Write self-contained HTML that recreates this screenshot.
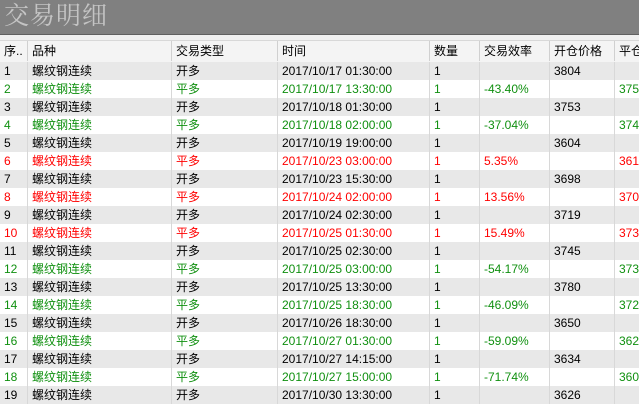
<!DOCTYPE html>
<html><head><meta charset="utf-8"><style>
body{margin:0;width:639px;height:400px;overflow:hidden;background:#fff;font-family:"Liberation Sans","Noto Sans CJK SC",sans-serif;font-size:12px;position:relative}
#t{position:absolute;left:0;top:0;width:639px;height:34px;background:#808080;border-bottom:1px solid #606060}
#t span{position:absolute;left:4px;top:0px;font-size:25px;color:#c4c4c4;font-family:"Noto Serif CJK SC",serif;letter-spacing:1px;line-height:28px}
#g{position:absolute;left:0;top:35px;width:639px;height:5px;background:#f0f0f0;border-bottom:1px solid #d8d8d8}
.r{position:absolute;left:0;width:660px;height:18px;line-height:18px}
.r div{position:absolute;top:0;height:18px;border-right:1px solid #d8d8d8;padding-left:4px;box-sizing:border-box;white-space:nowrap;overflow:hidden}
.h{top:41px;height:21px;line-height:20px;background:#f4f4f4;border-bottom:1px solid #cfcfcf}
.h div{height:20px;border-right:1px solid #d0d0d0}
.o{background:#e8e8e8;color:#000}
.e{background:#fff}
.gr{color:#109010}.rd{color:#f00}
.c0{left:0;width:28px}.c1{left:28px;width:144px}.c2{left:172px;width:106px}.c3{left:278px;width:152px}.c4{left:430px;width:50px}.c5{left:480px;width:70px}.c6{left:550px;width:65px}.c7{left:615px;width:60px}
</style></head><body>
<div id="t"><span>交易明细</span></div><div id="g"></div>
<div class="r h"><div class="c0">序..</div><div class="c1">品种</div><div class="c2">交易类型</div><div class="c3">时间</div><div class="c4">数量</div><div class="c5">交易效率</div><div class="c6">开仓价格</div><div class="c7">平仓</div></div>
<div id="rows"></div>
<script>
var d=[
["开多","2017/10/17 01:30:00","","3804",""],
["平多","2017/10/17 13:30:00","-43.40%","","375","gr"],
["开多","2017/10/18 01:30:00","","3753",""],
["平多","2017/10/18 02:00:00","-37.04%","","374","gr"],
["开多","2017/10/19 19:00:00","","3604",""],
["平多","2017/10/23 03:00:00","5.35%","","361","rd"],
["开多","2017/10/23 15:30:00","","3698",""],
["平多","2017/10/24 02:00:00","13.56%","","370","rd"],
["开多","2017/10/24 02:30:00","","3719",""],
["平多","2017/10/25 01:30:00","15.49%","","373","rd"],
["开多","2017/10/25 02:30:00","","3745",""],
["平多","2017/10/25 03:00:00","-54.17%","","373","gr"],
["开多","2017/10/25 13:30:00","","3780",""],
["平多","2017/10/25 18:30:00","-46.09%","","372","gr"],
["开多","2017/10/26 18:30:00","","3650",""],
["平多","2017/10/27 01:30:00","-59.09%","","362","gr"],
["开多","2017/10/27 14:15:00","","3634",""],
["平多","2017/10/27 15:00:00","-71.74%","","360","gr"],
["开多","2017/10/30 13:30:00","","3626",""]];
var h="";
d.forEach(function(x,i){h+='<div class="r '+(i%2?'e ':'o ')+(x[5]||'')+'" style="top:'+(62+i*18)+'px"><div class="c0">'+(i+1)+'</div><div class="c1">螺纹钢连续</div><div class="c2">'+x[0]+'</div><div class="c3">'+x[1]+'</div><div class="c4">1</div><div class="c5">'+x[2]+'</div><div class="c6">'+x[3]+'</div><div class="c7">'+x[4]+'</div></div>';});
document.getElementById("rows").innerHTML=h;
</script>
</body></html>
